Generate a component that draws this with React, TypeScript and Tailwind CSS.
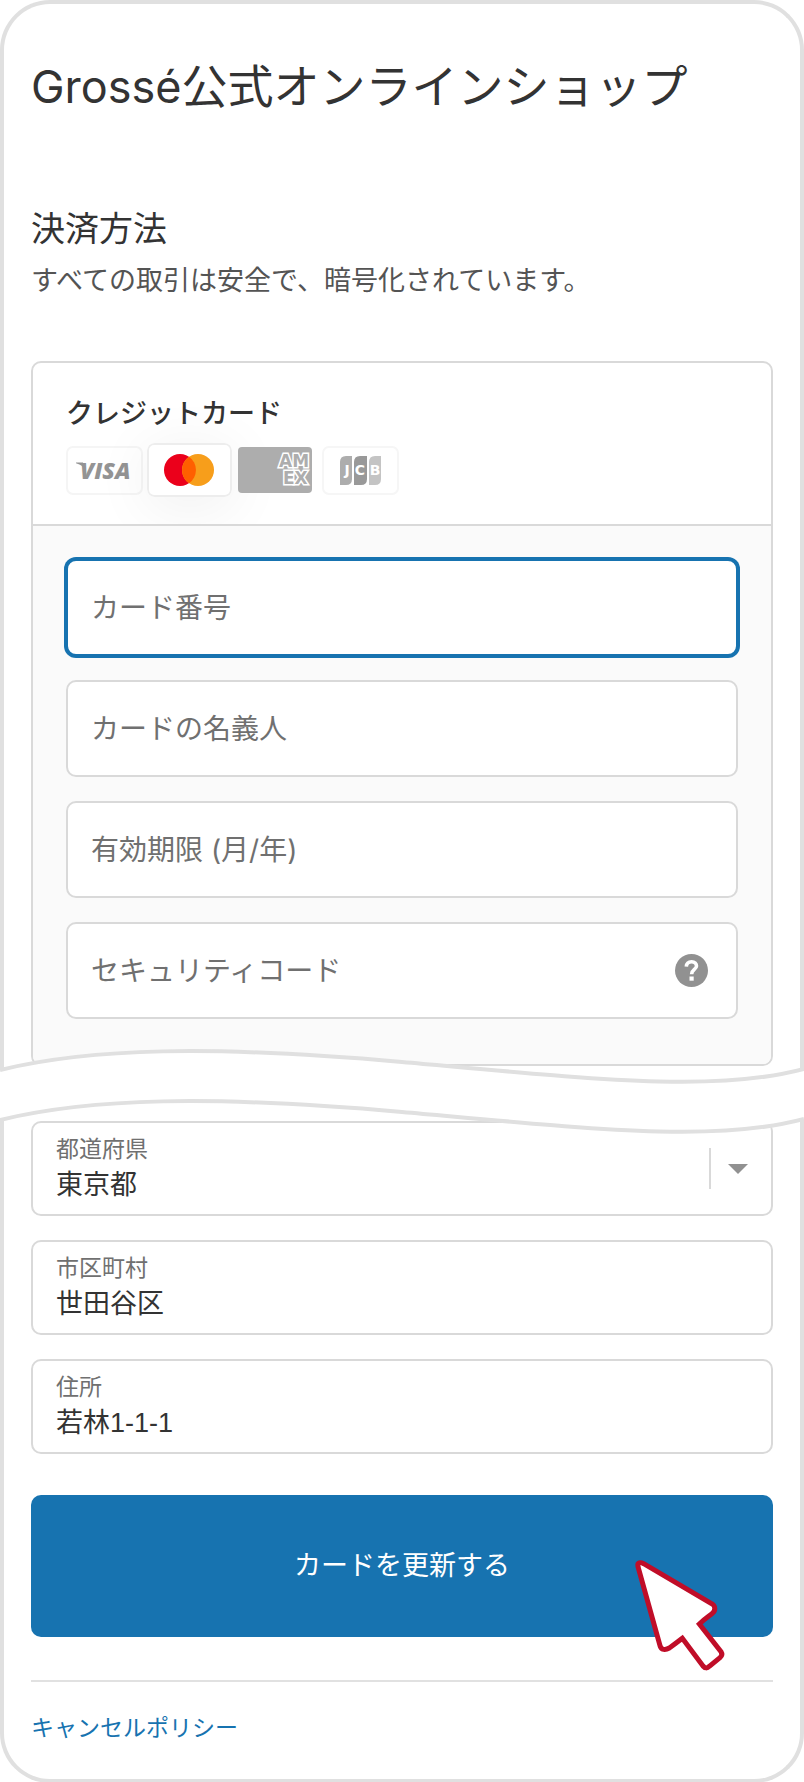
import type { ReactNode } from "react";

const cardFields = [
  { id: "card-number", label: "カード番号", active: true, help: false },
  { id: "card-name", label: "カードの名義人", active: false, help: false },
  { id: "card-expiry", label: "有効期限 (月/年)", active: false, help: false },
  { id: "card-code", label: "セキュリティコード", active: false, help: true },
];

function Visa() {
  return (
    <svg role="img" aria-label="Visa" viewBox="0 0 77 49" className="h-[49px] w-[77px]">
      <rect x="1" y="1" width="75" height="47" rx="6" fill="none" stroke="#f5f5f5" strokeWidth="2" />
      <path d="M10 16.5 L17 16.5 L19.500 25 C18 21 15 18.500 10 17.300 Z" fill="#949494" />
      <text x="14" y="33" fontFamily="Open Sans" fontSize="23" fontWeight="800" fontStyle="italic" fill="#949494">VISA</text>
    </svg>
  );
}

function Mastercard() {
  return (
    <svg role="img" aria-label="Mastercard" viewBox="0 0 85 54" className="h-[54px] w-[85px] rounded-lg bg-white shadow-[0_8px_60px_rgba(0,0,0,0.07)]">
      <rect x="1" y="1" width="83" height="52" rx="6" fill="#fff" stroke="#ededed" strokeWidth="2" />
      <circle cx="33" cy="27" r="16" fill="#eb001b" />
      <circle cx="51" cy="27" r="16" fill="#f79e1b" />
      <path d="M42 13.800 A16 16 0 0 1 42 40.200 A16 16 0 0 1 42 13.800 Z" fill="#ff5f00" />
    </svg>
  );
}

function Amex() {
  return (
    <svg role="img" aria-label="American Express" viewBox="0 0 74 46" className="h-[46px] w-[74px] rounded-[4px]">
      <rect width="74" height="46" fill="#adadad" />
      <g fontFamily="DejaVu Sans" fontWeight="700" fontSize="17" fill="#adadad" stroke="#fff" strokeWidth="3" strokeLinejoin="miter" paintOrder="stroke">
        <text x="41" y="20">AM</text>
        <text x="45" y="37">EX</text>
      </g>
    </svg>
  );
}

function Jcb() {
  return (
    <svg role="img" aria-label="JCB" viewBox="0 0 77 49" className="h-[49px] w-[77px]">
      <rect x="1" y="1" width="75" height="47" rx="6" fill="none" stroke="#f6f6f6" strokeWidth="2" />
      <path d="M18 16 Q18 10 24 10 H30 V33 Q30 39 24 39 H18 Z" fill="#adadad" />
      <path d="M32 16 Q32 10 38 10 H45 V33 Q45 39 39 39 H32 Z" fill="#999" />
      <path d="M47 16 Q47 10 53 10 H59 V33 Q59 39 53 39 H47 Z" fill="#c4c4c4" />
      <g fontFamily="DejaVu Sans" fontWeight="700" fontSize="14" fill="#fff" textAnchor="middle">
        <text x="25" y="29">J</text>
        <text x="38" y="29">C</text>
        <text x="53" y="29">B</text>
      </g>
    </svg>
  );
}

function WaveBreak() {
  return (
    <svg aria-hidden="true" viewBox="0 0 804 92" preserveAspectRatio="none" className="relative z-10 -mt-[43px] -mb-[38px] block h-[92px] w-full">
      <path d="M0 23 C90 1 210 -2 402 15 C594 32 714 46 804 22 V72 C714 96 594 82 402 65 C210 48 90 51 0 73 Z" fill="#fff" />
      <path d="M0 23 C90 1 210 -2 402 15 C594 32 714 46 804 22" fill="none" stroke="#e0e0e0" strokeWidth="4" />
      <path d="M0 73 C90 51 210 48 402 65 C594 82 714 96 804 72" fill="none" stroke="#e0e0e0" strokeWidth="4" />
    </svg>
  );
}

function Pointer() {
  return (
    <svg aria-hidden="true" viewBox="0 0 480 480" className="pointer-events-none absolute top-9 right-[13px] size-40">
      <path
        d="M114 107 C111 93 121 93 131 98 L337 219 C346 225 347 238 338 246 C330 254 318 260 298 279 L363 362 C368 370 366 375 360 380 L329 405 C321 413 315 412 309 405 L247 322 C229 336 218 344 208 351 C196 358 183 357 180 344 Z"
        fill="#fff"
        stroke="#c00d28"
        strokeWidth="15"
        strokeLinejoin="miter"
      />
    </svg>
  );
}

function AddressField({ id, label, children }: { id: string; label: string; children: ReactNode }) {
  return (
    <div className="relative flex flex-col rounded-[10px] border-2 border-[#d9d9d9] bg-white px-[23px] py-3">
      <label htmlFor={id} className="mb-[5px] text-[23px] leading-7 text-[#707070]">
        {label}
      </label>
      {children}
    </div>
  );
}

export default function App() {
  return (
    <main className="w-full bg-white font-['Inter','Noto_Sans_CJK_JP',sans-serif] text-[#333]">
      <section className="rounded-t-[50px] border-4 border-b-0 border-[#e0e0e0] px-[27px] pt-[54px] pb-6">
        <h1 className="text-[46px] leading-[56px] whitespace-nowrap">
          <span className="text-[45px]">Grossé</span>公式オンラインショップ
        </h1>
        <h2 className="mt-[92px] text-[34px] leading-[44px]">決済方法</h2>
        <p className="mt-3 text-[27px] leading-9 text-[#545454]">すべての取引は安全で、暗号化されています。</p>

        <div className="mt-[62px] rounded-[10px] border-2 border-[#d9d9d9]">
          <div className="overflow-hidden border-b-2 border-[#d9d9d9] px-[33px] pt-[35px] pb-[27px]">
            <h3 className="text-[27px] leading-8 font-medium">クレジットカード</h3>
            <div className="mt-[13px] flex items-center">
              <Visa />
              <div className="ml-1"><Mastercard /></div>
              <div className="ml-[6px]"><Amex /></div>
              <div className="ml-[10px]"><Jcb /></div>
            </div>
          </div>
          <div className="flex flex-col gap-6 rounded-b-lg bg-[#fafafa] px-[33px] pt-[33px] pb-[45px]">
            {cardFields.map((field) => (
              <div
                key={field.id}
                className={
                  field.active
                    ? "relative flex h-[97px] items-center rounded-[10px] border-2 border-[#1773b0] bg-white ring-2 ring-[#1773b0]"
                    : "relative flex h-[97px] items-center rounded-[10px] border-2 border-[#d9d9d9] bg-white"
                }
              >
                <label
                  htmlFor={field.id}
                  className="pointer-events-none absolute inset-x-[23px] text-[28px] leading-[44px] text-[#707070]"
                >
                  {field.label}
                </label>
                <input
                  id={field.id}
                  type="text"
                  className="h-full min-w-0 flex-1 bg-transparent px-[23px] text-[28px] leading-[44px] outline-none"
                />
                {field.help && (
                  <button type="button" aria-label="ヘルプ" className="mr-7 shrink-0">
                    <svg viewBox="0 0 33 33" className="block size-[33px]">
                      <circle cx="16.5" cy="16.5" r="16.5" fill="#919191" />
                      <path d="M11.300 12.600 C11.600 9.300 13.700 7.700 16.600 7.700 C19.800 7.700 21.500 9.600 21.500 12 C21.500 15.600 16.600 15.500 16.600 20.300" fill="none" stroke="#fff" strokeWidth="3.600" />
                      <rect x="14.500" y="22.500" width="4.200" height="4.200" fill="#fff" />
                    </svg>
                  </button>
                )}
              </div>
            ))}
          </div>
        </div>
      </section>

      <WaveBreak />

      <section className="rounded-b-[50px] border-4 border-t-0 border-[#e0e0e0] px-[27px] pt-5 pb-9">
        <div className="flex flex-col gap-6">
          <AddressField id="prefecture" label="都道府県">
            <select id="prefecture" className="h-[34px] w-full appearance-none bg-transparent text-[27px] leading-[34px] outline-none">
              <option>東京都</option>
            </select>
            <span aria-hidden="true" className="pointer-events-none absolute inset-y-0 right-[23px] flex items-center gap-[17px]">
              <span className="h-[41px] w-[2px] bg-[#d9d9d9]" />
              <svg viewBox="0 0 20 10" className="h-[10px] w-5">
                <path d="M0 0 H20 L10 10 Z" fill="#919191" />
              </svg>
            </span>
          </AddressField>
          <AddressField id="city" label="市区町村">
            <input id="city" type="text" defaultValue="世田谷区" className="h-[34px] w-full bg-transparent text-[27px] leading-[34px] outline-none" />
          </AddressField>
          <AddressField id="address" label="住所">
            <input id="address" type="text" defaultValue="若林1-1-1" className="h-[34px] w-full bg-transparent font-['Liberation_Sans','Noto_Sans_CJK_JP',sans-serif] text-[27px] leading-[34px] outline-none" />
          </AddressField>
        </div>

        <div className="relative mt-[41px]">
          <button type="button" className="block w-full rounded-[10px] bg-[#1773b0] py-[54px] text-[27px] leading-[34px] text-white">
            カードを更新する
          </button>
          <Pointer />
        </div>

        <hr className="mt-[43px] border-t-2 border-[#e1e1e1]" />
        <a href="#cancel-policy" className="mt-[31px] block w-fit text-[23px] leading-[30px] text-[#1773b0]">
          キャンセルポリシー
        </a>
      </section>
    </main>
  );
}
